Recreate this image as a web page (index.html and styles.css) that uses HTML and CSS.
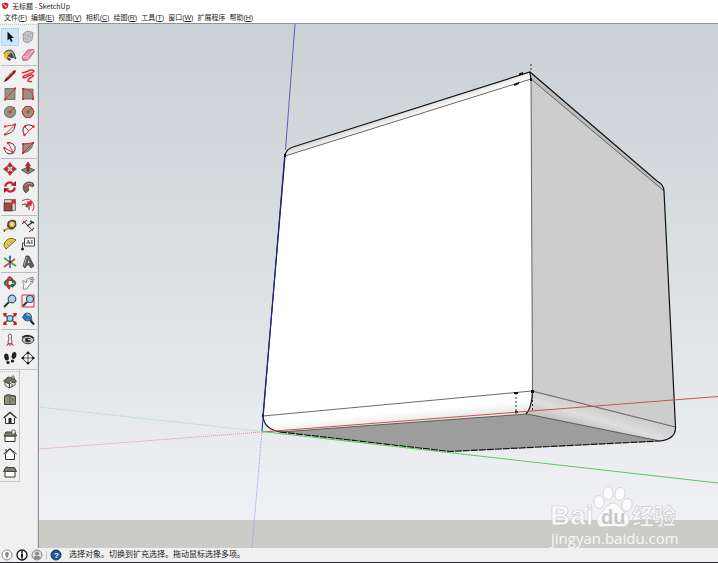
FILE: index.html
```html
<!DOCTYPE html>
<html lang="zh-CN">
<head>
<meta charset="utf-8">
<title>无标题 - SketchUp</title>
<link rel="stylesheet" href="styles.css">
</head>
<body>
<div class="app">
  <header class="titlebar">
    <svg class="logo" viewBox="0 0 8 8" aria-hidden="true"><path d="M1 1.500 4 .5l3.500 1-.5 4L4 7.500 1.500 6z" fill="#d8232e"/><path d="M2.500 2.500 4.500 3.500M4 5l2-1" stroke="#fff" fill="none"/></svg>
    <span>无标题 - SketchUp</span>
  </header>
  <nav class="menubar" aria-label="菜单">
    <button>文件(<u>F</u>)</button>
    <button>编辑(<u>E</u>)</button>
    <button>视图(<u>V</u>)</button>
    <button>相机(<u>C</u>)</button>
    <button>绘图(<u>R</u>)</button>
    <button>工具(<u>T</u>)</button>
    <button>窗口(<u>W</u>)</button>
    <button>扩展程序</button>
    <button>帮助(<u>H</u>)</button>
  </nav>
  <div class="body">
    <aside class="docks">
      <div class="toolbar">
        <div class="group">
          <button class="active" aria-label="选择"><svg viewBox="0 0 14 14"><path d="M4.500 1.500v9l2-1.800 1.500 3.300 1.600-.8-1.500-3.200h2.700z" fill="#111"/></svg></button>
          <button aria-label="制作组件"><svg viewBox="0 0 14 14"><path d="m2 4 4-3 6 1.500L11 10l-4 3-4.500-2z" fill="#c9c9c9" stroke="#999"/><path d="m2 4 5 1.500L12 2.500M7 5.500V13M4 7l1 3M9 6l1 2" stroke="#aaa" fill="none"/></svg></button>
          <button aria-label="材质"><svg viewBox="0 0 14 14"><path d="M1 7 7 3l5 4-6 5.500z" fill="#544b35" stroke="#222"/><path d="M1 6c1-4 8-6 10-1l2 6-3-2-2-4z" fill="#8aa0ad" stroke="#222" stroke-width=".7"/><path d="M1 6c3-3 5-3 7-1L5 7 4 12 1 9z" fill="#e5ba34"/><path d="m5 9 4 2" stroke="#eee"/></svg></button>
          <button aria-label="擦除"><svg viewBox="0 0 14 14"><path d="m1 9 6-7 5.500-.5.5 2.500-6 8-5 .5z" fill="#ef8cab" stroke="#a94d6d" stroke-width=".8"/><path d="m1.500 9 5-.5L12.500 2M6.500 8.500l.5 3" stroke="#fbd0dc" fill="none"/></svg></button>
        </div>
        <div class="group">
          <button aria-label="直线"><svg viewBox="0 0 14 14"><path d="m1 13 2-4 7-7 2-1 1 1-1 2-7 7z" fill="#8d1b20"/><path d="m4 9 6-6" stroke="#d95757"/><path d="m1 13 1.500-3 1.500 1.500z" fill="#222"/></svg></button>
          <button aria-label="手绘线"><svg viewBox="0 0 14 14"><path d="M1 3.500C4 5 10-1 12.500 1.500S1 6 2 8.500 10 4 12 6s-6 3-5 6c1 1 3 0 4 1" class="red bold"/></svg></button>
          <button aria-label="矩形"><svg viewBox="0 0 14 14"><path d="M2 1.500h10v11H2z" class="face"/><path d="m2 12.500 10-11" class="red"/><path d="M1 11.500h2v2H1zM11 .5h2v2h-2z" class="dot"/></svg></button>
          <button aria-label="旋转矩形"><svg viewBox="0 0 14 14"><path d="M2 2h10v10H2z" class="face"/><path d="M12 12V9C11 4 8 2 2 2v10" class="red"/><path d="M1 1h2v2H1zM1 11h2v2H1zM11 11h2v2h-2z" class="dot"/></svg></button>
          <button aria-label="圆"><svg viewBox="0 0 14 14"><circle cx="7" cy="7" r="5.700" class="face"/><path d="m7 7 4-4" class="red"/><circle cx="7" cy="7" r="1.300" class="dot"/><circle cx="11" cy="3" r="1" class="dot"/></svg></button>
          <button aria-label="多边形"><svg viewBox="0 0 14 14"><path d="m4 1.500 6 0 3 5-3 6H4l-3-6z" class="face"/><circle cx="7" cy="7" r="5.700" class="red"/><path d="m7 7 4-4" class="red"/><circle cx="7" cy="7" r="1.300" class="dot"/></svg></button>
          <button aria-label="圆弧"><svg viewBox="0 0 14 14"><path d="M12 1.500c0 5-3 9-10 10" class="ink"/><path d="M1.500 3.500 12 1.500l-10 10" class="red"/><path d="M1 2.500h2v2H1zM11 .5h2v2h-2zM1 10.500h2v2H1z" class="dot"/></svg></button>
          <button aria-label="两点圆弧"><svg viewBox="0 0 14 14"><path d="M3.500 12C-1 5 5-1 12.500 3.500" class="ink"/><path d="m3.500 12 9-8.500M4 4l4 4" class="red"/><circle cx="3.500" cy="12" r="1.200" class="dot"/><circle cx="12.500" cy="3.500" r="1.200" class="dot"/><circle cx="4" cy="3.500" r="1.200" class="dot"/></svg></button>
          <button aria-label="三点圆弧"><svg viewBox="0 0 14 14"><path d="M5 1.500C13 2 14 9 9.500 12S1 10 1.500 7" class="ink"/><path d="m5 1.500 5 10L1.500 7" class="red"/><circle cx="5" cy="2" r="1.200" class="dot"/><circle cx="10" cy="11.500" r="1.200" class="dot"/><circle cx="1.500" cy="7" r="1.200" class="dot"/></svg></button>
          <button aria-label="扇形"><svg viewBox="0 0 14 14"><path d="M2 3 12 2c0 5-4 9-10 10z" class="face"/><path d="M2 3 12 2M2 3v9L12 2" class="red"/><path d="M1 2h2v2H1zM11 1h2v2h-2zM1 11h2v2H1z" class="dot"/></svg></button>
        </div>
        <div class="group">
          <button aria-label="移动"><svg viewBox="0 0 14 14"><path d="M7 4v6M4 7h6" stroke="#bbb" stroke-width="1.500"/><path d="m7 .5 2.700 3.500L7 5 4.300 4zM7 13.500 4.300 10 7 9l2.700 1zM.5 7 4 4.300 5 7 4 9.700zM13.500 7 10 9.700 9 7l1-2.700z" fill="#d8232a" stroke="#7c1717" stroke-width=".5"/></svg></button>
          <button aria-label="推拉"><svg viewBox="0 0 14 14"><path d="m.5 8 6.500-3 6.500 3L7 12z" fill="#8f8e7d" stroke="#555"/><path d="M7 0 4.500 4H6v5h2V4h1.500z" fill="#d8232e" stroke="#611" stroke-width=".6"/></svg></button>
          <button aria-label="旋转"><svg viewBox="0 0 14 14"><path d="M2.200 6.500c.5-4 5-5 7.500-3M11.800 7.500c-.5 4-5 5-7.500 3" fill="none" stroke="#c9222c" stroke-width="2.200"/><path d="m7.500 5.500 5.500.5V1zM6.500 8.500 1 8v5z" fill="#a51b23"/></svg></button>
          <button aria-label="路径跟随"><svg viewBox="0 0 14 14"><path d="M3 11C0 4 6 0 12 3l1 3c-5-1-7 0-5 4L5 13z" fill="#716c5f" stroke="#333" stroke-width=".7"/><path d="M12 7C7 3 2 8 6 12" stroke="#c84a3c" stroke-width="1.500" fill="none"/><path d="M4 6c2-3 4-3 7-2" stroke="#aaa" fill="none"/></svg></button>
          <button aria-label="缩放"><svg viewBox="0 0 14 14"><path d="M1.500 1.500h11v11h-11z" fill="#d5d0bd" stroke="#777"/><path d="M1 5h8v8H1z" fill="#9a4a3f" stroke="#333" stroke-width=".7"/><path d="m12.500 1.500-5 1 1.500 1-3 3 1.500 1.500 3-3 1.500 1.500z" fill="#e3242b"/></svg></button>
          <button aria-label="偏移"><svg viewBox="0 0 14 14"><path d="M1 3C6 0 10 1 12 5c1.500 3 1 5-.5 8" class="red"/><path d="M1 7c4-2 8-1 7 5" class="ink"/><path d="m11 3-5 1 1 1.200L4.500 8 6 9.500 8.500 7 10 8z" fill="#e3242b" stroke="#833" stroke-width=".5"/></svg></button>
        </div>
        <div class="group">
          <button aria-label="卷尺工具"><svg viewBox="0 0 14 14"><path d="m5 3 4-2 3.500 1 .5 5-3 3H6L4.500 7z" fill="#55523f" stroke="#333" stroke-width=".8"/><circle cx="9" cy="5.200" r="2.800" fill="#e6cc3a"/><circle cx="9" cy="5.200" r="1.200" fill="#f6efb5"/><path d="m6 9-5 2.500" stroke="#bd9d17" stroke-width="1.800"/><path d="m1 10.500.5 2.500" stroke="#333"/></svg></button>
          <button aria-label="尺寸"><svg viewBox="0 0 14 14"><path d="m1 5 5-4M3 2.500l8 8.500M8 13l5-4" class="ink"/><path d="m2 2 3 3M9 9l3 3" class="red"/><path d="m6 7 6-4M9 2l4 2" class="ink bold"/></svg></button>
          <button aria-label="量角器"><svg viewBox="0 0 14 14"><path d="M1 9C1 4 6 0 11 2l2 1-10 9z" fill="#e4cf45" stroke="#776817"/><path d="M4 8c0-2 2-4 5-4L5 8z" fill="#f4f1dd" stroke="#998522" stroke-width=".6"/></svg></button>
          <button aria-label="文字"><svg viewBox="0 0 14 14"><path d="M3.500 1h10v8h-10zM1.500 12V6h2" fill="#fff" stroke="#444"/><circle cx="1.500" cy="12" r="1.500" fill="#222"/><text x="5" y="7" class="glyph">A1</text></svg></button>
          <button aria-label="轴"><svg viewBox="0 0 14 14"><path d="M7 13V1" stroke="#2b66b8" stroke-width="1.600"/><path d="m1 3 12 8" stroke="#36a449" stroke-width="1.600"/><path d="m1 12 11-8" stroke="#d94332" stroke-width="1.600"/><path d="m7 0 1.500 3h-3z" fill="#2b66b8"/><path d="M6 6h2v2H6z" fill="#333"/></svg></button>
          <button aria-label="三维文字"><svg viewBox="0 0 14 14"><path d="m2 11 3-10h3l5 10-3 2-2-3H6l-2 3z" fill="#5e625e" stroke="#333" stroke-width=".7"/><path d="M7 5v3h1.500z" fill="#eee"/><path d="m5.500 2-2.500 9" stroke="#aaa"/></svg></button>
        </div>
        <div class="group">
          <button aria-label="环绕观察"><svg viewBox="0 0 14 14"><ellipse cx="7" cy="7" rx="5.200" ry="3" fill="none" stroke="#238152" stroke-width="2.200"/><path d="M7 1.200c-3.500 1.500-3.500 9.500 0 11.500" fill="none" stroke="#c9303a" stroke-width="2.400"/><path d="M7 1.200c3 1.500 3 4 3 6" fill="none" stroke="#8f2128" stroke-width="1.500"/><path d="m8 8 4.500.5L9 12z" fill="#1b6440"/></svg></button>
          <button aria-label="平移"><svg viewBox="0 0 14 14"><path d="M2 13 3 8 1.500 5 3 4.500 5 7l1-4 6-2v1L8.500 4 13 3v1L9 6l3-.5v1L9 8l-3 5z" fill="#fafafa" stroke="#777" stroke-width=".8"/></svg></button>
          <button aria-label="缩放视图"><svg viewBox="0 0 14 14"><path d="m6 8-5 5" stroke="#333" stroke-width="2"/><circle cx="9" cy="5" r="3.800" class="lens"/></svg></button>
          <button aria-label="缩放窗口"><svg viewBox="0 0 14 14"><path d="M1 1h12v12H1z" class="red"/><path d="m6 8-4 4" stroke="#333" stroke-width="2"/><circle cx="9" cy="5" r="3.500" class="lens"/></svg></button>
          <button aria-label="充满视窗"><svg viewBox="0 0 14 14"><path d="m0 1 4.500 0L1 5zM14 1H9.500L13 5zM0 13h4.500L1 9zM14 13H9.500L13 9z" fill="#d8232e"/><path d="m1 2 3 3m9-3-3 3M1 12l4-4m8 4-3-3" stroke="#922" stroke-width="1.500"/><circle cx="7" cy="6.500" r="3" class="lens"/></svg></button>
          <button aria-label="上一个"><svg viewBox="0 0 14 14"><path d="m9 8 4 4.500" stroke="#222" stroke-width="2"/><circle cx="6.500" cy="5" r="4" fill="#8cc1e2" stroke="#245675"/><path d="m1 5 4-3v2c4 0 6 1 6 5-2-2-3-2-6-2v2z" fill="#2879ba" stroke="#1c5480" stroke-width=".6"/></svg></button>
        </div>
        <div class="group">
          <button aria-label="定位相机"><svg viewBox="0 0 14 14"><path d="M7 1C5 1 5 4 6 5l-1 4 1 3h2l1-3-1-4c1-1 1-4-1-4z" fill="#f1f1f1" stroke="#666"/><path d="m3.500 13 2-3 1.500 1 1.500-1 2 3" class="red"/></svg></button>
          <button aria-label="绕轴旋转"><svg viewBox="0 0 14 14"><path d="M1 7c2-5 10-5 12 0-2 5-10 5-12 0z" fill="#ccc" stroke="#333"/><path d="M1 4.500c4-3 8-2.500 12 .5" stroke="#222" stroke-width="1.500" fill="none"/><ellipse cx="7" cy="7" rx="3" ry="2.300" fill="#333"/><path d="m7 6.500 3 .5" stroke="#eee"/></svg></button>
          <button aria-label="漫游"><svg viewBox="0 0 14 14"><ellipse cx="3.500" cy="6" rx="2.300" ry="3.500" transform="rotate(-12 3.500 6)" fill="#222"/><ellipse cx="5" cy="11.500" rx="1.700" ry="1.500" fill="#222"/><ellipse cx="11" cy="4.500" rx="2.300" ry="3.500" transform="rotate(12 11 4.500)" fill="#222"/><ellipse cx="9.500" cy="10" rx="1.700" ry="1.500" fill="#222"/></svg></button>
          <button aria-label="剖切面"><svg viewBox="0 0 14 14"><circle cx="7" cy="7" r="4.500" fill="#fff" stroke="#333"/><path d="M7 3v8M3 7h8" stroke="#555"/><path d="m7 0 2 2.500H5zM7 14l-2-2.500h4zM0 7l2.500-2v4zM14 7l-2.500 2V5z" fill="#111"/></svg></button>
        </div>
      </div>
      <div class="toolbar views">
        <button aria-label="等轴"><svg viewBox="0 0 14 14"><path d="m2 6.500 4.500 2.500v4L2 10.500zM6.500 9 12 6v4l-5.500 3z" fill="#f1efe8" stroke="#333" stroke-width=".8"/><path d="M.5 6 5 2l6 1 2.500 3.500L10 8 7.500 5 6 9z" fill="#77705f" stroke="#333" stroke-width=".7"/><path d="M9 1h2v2.500H9z" fill="#eee" stroke="#333" stroke-width=".6"/><path d="M8.500 9h1v3h-1z" fill="#444"/></svg></button>
        <button aria-label="俯视图"><svg viewBox="0 0 14 14"><path d="m1.500 3 3-1.500L12.500 3v8.500h-11z" fill="#929180" stroke="#4f4d42"/><path d="M7 3v8M2 3h10M9 6h1v2" stroke="#595648" fill="none"/></svg></button>
        <button aria-label="前视图"><svg viewBox="0 0 14 14"><path d="M2.500 7v5.500h9V7" fill="#fff" stroke="#333"/><path d="M.5 7 7 1.500 13.500 7" class="ink bold"/><path d="M5.500 7h3v5.500h-3z" fill="#222"/></svg></button>
        <button aria-label="右视图"><svg viewBox="0 0 14 14"><path d="M2 7h10v5.500H2z" fill="#fff" stroke="#333"/><path d="m1 7 2-4h9l1.500 4z" fill="#807c67" stroke="#444"/><path d="M9 1h3v4H9z" fill="#fff" stroke="#444" stroke-width=".7"/></svg></button>
        <button aria-label="后视图"><svg viewBox="0 0 14 14"><path d="M2.500 7v5.500h9V7L7 2z" fill="#fff" stroke="#333"/><path d="M.5 7 7 1.500 13.500 7M3 4V2" class="ink"/></svg></button>
        <button aria-label="左视图"><svg viewBox="0 0 14 14"><path d="M2 6h10v6H2z" fill="#fff" stroke="#333"/><path d="m.5 6.500 2-4h9l2 4z" fill="#807c67" stroke="#444"/><path d="M3 2h2" stroke="#555"/></svg></button>
      </div>
    </aside>
    <main class="viewport">
      <svg class="scene" viewBox="39 24 679 524" preserveAspectRatio="xMinYMin slice" role="img" aria-label="圆角立方体模型">
        <defs>
          <linearGradient id="fillet" gradientUnits="userSpaceOnUse" x1="596" y1="407" x2="590" y2="428">
            <stop offset="0" stop-color="#cdcdcd"/><stop offset=".55" stop-color="#dedede"/><stop offset="1" stop-color="#c5c5c5"/>
          </linearGradient>
          <linearGradient id="topFillet" gradientUnits="userSpaceOnUse" x1="407" y1="109" x2="410" y2="118">
            <stop offset="0" stop-color="#d4d4d4"/><stop offset="1" stop-color="#fff"/>
          </linearGradient>
          <linearGradient id="lowFillet" gradientUnits="userSpaceOnUse" x1="400" y1="412" x2="401" y2="423">
            <stop offset="0" stop-color="#fff"/><stop offset="1" stop-color="#e6e6e6"/>
          </linearGradient>
        </defs>
        <path d="M263 416 285 156 531 79 532.500 391 527 414 280 432Q265 429 263 416Z" fill="#fff"/>
        <path d="M285 156Q286 149 293 147L530 72 531 79Z" fill="url(#topFillet)"/>
        <path d="M263 416 532 391 527 414 280 432Q265 429 263 416Z" fill="url(#lowFillet)"/>
        <path d="M531 79 664 191 675.500 427 532.500 391Z" fill="#cdcdcd"/>
        <path d="M530 72 657 181Q664 186 664 191L531 79Z" fill="#bdbfbf"/>
        <path d="M532.500 391 675.500 427Q676 439 660 441L527 414Q532 407 532.500 391Z" fill="url(#fillet)"/>
        <path d="M280 432 527 414 660 441 450 451.500Z" fill="#9d9d9d"/>
        <g fill="none" stroke="#444" stroke-width=".8">
          <path d="M285 156 531 79 532.500 391M531 79 664 191M263 416 532 391 675.500 427M280 432 527 414 660 441"/>
        </g>
        <g fill="none" stroke="#111" stroke-width="1.200">
          <path d="M285 156Q286 149 293 147L530 72 657 181Q664 185 664 191L675.500 427Q676 439 660 441"/>
          <path d="M285 156 263 416Q264 429 280 432"/>
          <path d="M532.500 391Q532 408 526 414"/>
          <path d="M280 432 450 451.500 660 441" stroke-dasharray="7 1"/>
          <path d="M530 72 531 81"/>
        </g>
        <path d="M531 64v7M516 393v21M532.500 392v19" fill="none" stroke="#333" stroke-dasharray="2 2"/>
        <path d="M514 84l5-2v2l-5 2zM519 73.500l4-1.500v2l-4 1.500zM530 78h2v3h-2zM514 392h4v2h-4zM515 411h3v2h-3zM531 390h3v3h-3zM284 154h2v3h-2zM262 414h2v3h-2z" fill="#111"/>
        <g fill="none">
          <path d="M295 24 285.500 150" stroke="#5962c2"/>
          <path d="M284.500 157 262 431" stroke="#25259a"/>
          <path d="M262 431 252 548" stroke="#9a9be8" stroke-dasharray="1 1"/>
          <path d="M262 432 718 396.500" stroke="#ca5358"/>
          <path d="M262 432 39 449" stroke="#df9191" stroke-dasharray="1 1"/>
          <path d="M262 431.500 718 483" stroke="#5bc95e"/>
          <path d="M262 431.500 39 407" stroke="#a0d8a4" stroke-dasharray="1 1"/>
        </g>
      </svg>
      <div class="watermark">
        <svg viewBox="0 0 132 62" role="img" aria-label="Baidu 经验">
          <g fill="#fff" stroke="#c4c4c4" stroke-width=".7">
            <ellipse cx="49" cy="16" rx="5" ry="6.500" transform="rotate(-12 49 16)"/>
            <ellipse cx="58" cy="7" rx="5" ry="6.500"/>
            <ellipse cx="70" cy="8" rx="5" ry="6.500" transform="rotate(12 70 8)"/>
            <ellipse cx="77" cy="19" rx="5" ry="6.500" transform="rotate(18 77 19)"/>
            <path d="M63 17c5 0 7 6 11 9 8 6 6 15-2 15-5 0-13-1-18 0-8 1-10-9-2-15 4-3 6-9 11-9z"/>
            <text x="0" y="39" class="brand">Bai</text>
            <text x="82" y="38" class="brand-cn">经验</text>
          </g>
          <text x="51" y="38" class="brand-du">du</text>
          <text x="1" y="58" class="brand-url">jingyan.baidu.com</text>
        </svg>
      </div>
    </main>
  </div>
  <footer class="statusbar">
    <button aria-label="地理位置"><svg viewBox="0 0 12 12"><circle cx="6" cy="6" r="5" fill="#fff" stroke="#8b8b8b"/><path d="M6 10 4 5a2 2 0 1 1 4 0z" fill="#888"/></svg></button>
    <button aria-label="作者信息"><svg viewBox="0 0 12 12"><circle cx="6" cy="6" r="5" fill="#fff" stroke="#111" stroke-width="1.300"/><circle cx="6" cy="3" r="1" fill="#111"/><path d="M5 4.500h2V7l-.5 3h-1L5 7z" fill="#111"/></svg></button>
    <button aria-label="登录"><svg viewBox="0 0 12 12"><circle cx="6" cy="6" r="5" fill="#ddd" stroke="#888"/><circle cx="6" cy="4.500" r="2" fill="#888"/><path d="M2.500 9c1-3 6-3 7 0-2 2-5 2-7 0z" fill="#888"/></svg></button>
    <span class="divider"></span>
    <button aria-label="帮助"><svg viewBox="0 0 12 12"><circle cx="6" cy="6" r="5" fill="#1e5798" stroke="#173a66"/><text x="4" y="9" class="help">?</text></svg></button>
    <span class="hint">选择对象。切换到扩充选择。拖动鼠标选择多项。</span>
  </footer>
</div>
</body>
</html>
```
FILE: styles.css
```css
* { box-sizing: border-box; }

body {
  margin: 0;
  background: #f0f0f0;
  color: #222;
  font-family: "Liberation Sans", "Noto Sans CJK SC", sans-serif;
}

button {
  display: flex;
  align-items: center;
  justify-content: center;
  margin: 0;
  padding: 0;
  border: 0;
  background: none;
  color: inherit;
  font: inherit;
}

.app {
  display: flex;
  flex-direction: column;
  height: 100vh;
  border-bottom: 1px solid #2c2c30;
}

.titlebar,
.menubar {
  display: flex;
  align-items: center;
  background: #fff;
  font-size: 7px;
  line-height: 11px;
  white-space: nowrap;
}

.titlebar {
  gap: 3px;
  height: 12px;
  padding-left: 1px;
  font-family: "Noto Sans CJK SC", sans-serif;
}

.logo {
  width: 8px;
  height: 8px;
}

.menubar {
  gap: 4px;
  height: 11px;
  padding-left: 4px;
}

.menubar button { display: block; }

.body {
  display: flex;
  flex: 1;
  min-height: 0;
}

.docks {
  flex: none;
  width: 38px;
  border-right: 1px solid #dcdcdc;
}

.toolbar {
  padding: 5px 0 2px 1px;
  border-bottom: 1px solid #c6c6c6;
  background: linear-gradient(90deg, #c4c4c4 50%, transparent 50%) 2px 1px / 2px 1px repeat-x;
}

.group {
  display: grid;
  grid-template-columns: 18px 18px;
  grid-auto-rows: 18px;
}

.group + .group {
  margin-top: 1px;
  padding-top: 1px;
  border-top: 1px solid #bdbdbd;
}

.toolbar svg {
  width: 14px;
  height: 14px;
}

.active {
  background: #cce6fa;
  outline: 1px solid #b0d8f5;
  outline-offset: -1px;
}

.toolbar.views {
  display: grid;
  grid-auto-rows: 18px;
  width: 20px;
  padding: 3px 0 0 1px;
  border-right: 1px solid #c6c6c6;
}

.face { fill: #94947f; stroke: #666658; stroke-width: 0.8; }
.red { fill: none; stroke: #dc3038; }
.ink { fill: none; stroke: #333; }
.bold { stroke-width: 1.5; }
.dot { fill: #e3242b; }
.lens { fill: #a9d2eb; stroke: #345870; stroke-width: 1.2; }
.glyph { fill: #222; font: bold 6px "Liberation Serif", serif; }

.viewport {
  position: relative;
  flex: 1;
  min-width: 0;
  overflow: hidden;
  border-top: 1px solid #8f9496;
  border-left: 1px solid #8f9496;
  background: linear-gradient(#cad1d5, #dbe0e2 50%, #f0f1f4) 0 0 / 100% calc(100% - 28px) no-repeat #cbccc8;
}

.scene {
  display: block;
  width: 100%;
  height: 100%;
}

.watermark {
  position: absolute;
  right: 36px;
  bottom: 0;
  width: 132px;
  opacity: 0.85;
}

.watermark svg {
  display: block;
  width: 100%;
}

.brand { font: bold 28px "Liberation Sans", sans-serif; }
.brand-cn { font: bold 22px "Noto Sans CJK SC", sans-serif; }
.brand-du { fill: #c2c2c0; font: bold 20px "Liberation Sans", sans-serif; }
.brand-url { fill: #fff; font: 15px "Open Sans", sans-serif; }

.statusbar {
  display: flex;
  align-items: center;
  gap: 3px;
  height: 14px;
  padding-left: 1px;
  font-size: 8px;
  line-height: 14px;
  white-space: nowrap;
}

.statusbar svg {
  display: block;
  width: 12px;
  height: 12px;
}

.divider {
  width: 1px;
  height: 8px;
  background: #c4c4c4;
}

.hint { margin-left: 4px; }
.help { fill: #fff; font: bold 8px "Liberation Sans", sans-serif; }
```
